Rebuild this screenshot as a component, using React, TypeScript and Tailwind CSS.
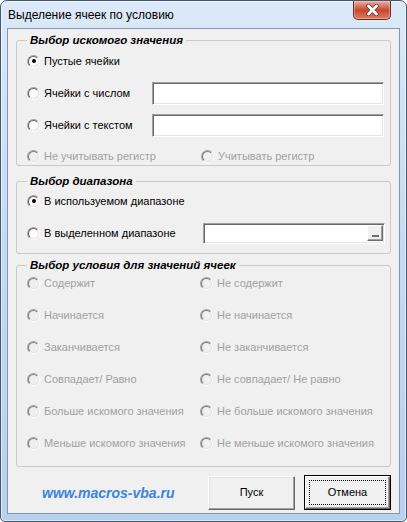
import React from 'react';

const font = { fontFamily: '"Liberation Sans", Arial, sans-serif' };

type RadioProps = { checked?: boolean; disabled?: boolean; label: string };

const Radio: React.FC<RadioProps> = ({ checked, disabled, label }) => (
  <div className="flex items-center gap-[4px]">
    <span className="w-[13px] h-[13px] shrink-0 rounded-full border border-t-[#a0a0a0] border-l-[#a0a0a0] border-b-white border-r-white flex items-center justify-center">
      <span
        className={
          disabled
            ? 'w-[11px] h-[11px] rounded-full border border-t-[#7a7a7a] border-l-[#7a7a7a] border-b-[#e3e3e3] border-r-[#e3e3e3] bg-[#f0f0f0]'
            : 'w-[11px] h-[11px] rounded-full border border-t-[#5f5f5f] border-l-[#5f5f5f] border-b-[#e3e3e3] border-r-[#e3e3e3] bg-white flex items-center justify-center'
        }
      >
        {checked && <span className="w-[4px] h-[4px] rounded-full bg-black" />}
      </span>
    </span>
    <span className={disabled ? 'text-[#a0a0a0] whitespace-nowrap' : 'text-black whitespace-nowrap'}>{label}</span>
  </div>
);

const TextBox: React.FC<{ className?: string; children?: React.ReactNode }> = ({ className, children }) => (
  <div
    className={`bg-white border border-t-[#a0a0a0] border-l-[#a0a0a0] border-b-white border-r-white shadow-[inset_1px_1px_0_#696969,inset_-1px_-1px_0_#e3e3e3] ${className ?? ''}`}
  >
    {children}
  </div>
);

const Legend: React.FC<{ text: string }> = ({ text }) => (
  <legend className="px-[3px] text-[11.5px] leading-[14px] font-bold italic text-black">{text}</legend>
);

export default function App() {
  return (
    <div className="w-[407px] h-[522px] bg-white" style={font}>
      <div className="w-[407px] h-[522px] flex flex-col rounded-t-[7px] rounded-b-[5px] border border-[#44586f] bg-gradient-to-b from-[#dce9f8] via-[#c4d9f1] to-[#b9d0ed] shadow-[inset_0_0_0_1px_rgba(255,255,255,0.55)] text-[11px] leading-[13px]">
        {/* title bar */}
        <div className="h-[27px] flex items-start">
          <div className="pl-[7px] pt-[7px] text-[12px] leading-[15px] text-black">Выделение ячеек по условию</div>
          <div className="ml-auto mr-[15px] w-[38px] h-[19px] rounded-b-[5px] border border-t-0 border-[#6a2a22] bg-gradient-to-b from-[#eab0a3] via-[#c8442e] to-[#dc7d5f] shadow-[inset_0_0_0_1px_rgba(255,210,200,0.45)] flex items-center justify-center">
            <svg width="15" height="12" viewBox="0 0 15 12">
              <path d="M3.5 2 L11.5 10 M11.5 2 L3.5 10" stroke="#6b3a33" strokeWidth="4.4" strokeLinecap="round" />
              <path d="M3.5 2 L11.5 10 M11.5 2 L3.5 10" stroke="#ffffff" strokeWidth="2.8" strokeLinecap="round" />
            </svg>
          </div>
        </div>

        {/* client area */}
        <div className="mx-[6px] mb-[7px] flex-1 border border-[#8197b3] bg-[#f0f0f0] px-[8px] pt-[4px] flex flex-col">
          {/* group 1 */}
          <fieldset className="border border-[#cacaca] rounded-[3px] pl-[10px] pr-[6px] flex flex-col">
            <Legend text="Выбор искомого значения" />
            <div className="mt-[2px] h-[24px] flex items-center">
              <Radio checked label="Пустые ячейки" />
            </div>
            <div className="mt-[8px] h-[24px] flex items-center">
              <div className="w-[125px]">
                <Radio label="Ячейки с числом" />
              </div>
              <TextBox className="flex-1 h-[23px]" />
            </div>
            <div className="mt-[8px] h-[24px] flex items-center">
              <div className="w-[125px]">
                <Radio label="Ячейки с текстом" />
              </div>
              <TextBox className="flex-1 h-[23px]" />
            </div>
            <div className="mt-[10px] h-[18px] grid grid-cols-[174px_1fr] items-center">
              <Radio disabled label="Не учитывать регистр" />
              <Radio disabled label="Учитывать регистр" />
            </div>
          </fieldset>

          {/* group 2 */}
          <fieldset className="mt-[8px] border border-[#cacaca] rounded-[3px] pl-[10px] pr-[5px] pb-[9px] flex flex-col">
            <Legend text="Выбор диапазона" />
            <div className="mt-[2px] h-[22px] flex items-center">
              <Radio checked label="В используемом диапазоне" />
            </div>
            <div className="mt-[10px] h-[22px] flex items-center">
              <div className="w-[176px]">
                <Radio label="В выделенном диапазоне" />
              </div>
              <TextBox className="flex-1 h-[21px] flex items-center justify-end pr-[1px]">
                <div className="w-[16px] h-[16px] bg-[#f0f0f0] border border-t-white border-l-white border-b-[#696969] border-r-[#696969] shadow-[inset_-1px_-1px_0_#a0a0a0] flex items-end justify-center pb-[3px]">
                  <div className="w-[7px] h-[2px] bg-[#707070]" />
                </div>
              </TextBox>
            </div>
          </fieldset>

          {/* group 3 */}
          <fieldset className="mt-[4px] border border-[#cacaca] rounded-[3px] pl-[10px] pr-[6px] pb-[12px]">
            <Legend text="Выбор условия для значений ячеек" />
            <div className="grid grid-cols-[173px_1fr] auto-rows-[22px] gap-y-[10px] items-center">
              <Radio disabled label="Содержит" />
              <Radio disabled label="Не содержит" />
              <Radio disabled label="Начинается" />
              <Radio disabled label="Не начинается" />
              <Radio disabled label="Заканчивается" />
              <Radio disabled label="Не заканчивается" />
              <Radio disabled label="Совпадает/ Равно" />
              <Radio disabled label="Не совпадает/ Не равно" />
              <Radio disabled label="Больше искомого значения" />
              <Radio disabled label="Не больше искомого значения" />
              <Radio disabled label="Меньше искомого значения" />
              <Radio disabled label="Не меньше искомого значения" />
            </div>
          </fieldset>

          {/* footer */}
          <div className="mt-[8px] flex items-center">
            <div className="w-[192px] pl-[26px] text-[14px] leading-[16px] font-bold italic text-[#3a84dc]">
              www.macros-vba.ru
            </div>
            <button className="w-[87px] h-[34px] bg-[#f0f0f0] border border-t-white border-l-white border-b-[#696969] border-r-[#696969] shadow-[inset_-1px_-1px_0_#a0a0a0,inset_1px_1px_0_#e3e3e3] text-[11px] text-black">
              Пуск
            </button>
            <button className="ml-[9px] w-[87px] h-[35px] bg-[#f0f0f0] border border-black p-0">
              <div className="w-full h-full border border-t-white border-l-white border-b-[#696969] border-r-[#696969] shadow-[inset_-1px_-1px_0_#a0a0a0] p-[3px]">
                <div className="w-full h-full border border-dotted border-black flex items-center justify-center text-[11px] text-black">
                  Отмена
                </div>
              </div>
            </button>
          </div>
        </div>
      </div>
    </div>
  );
}
